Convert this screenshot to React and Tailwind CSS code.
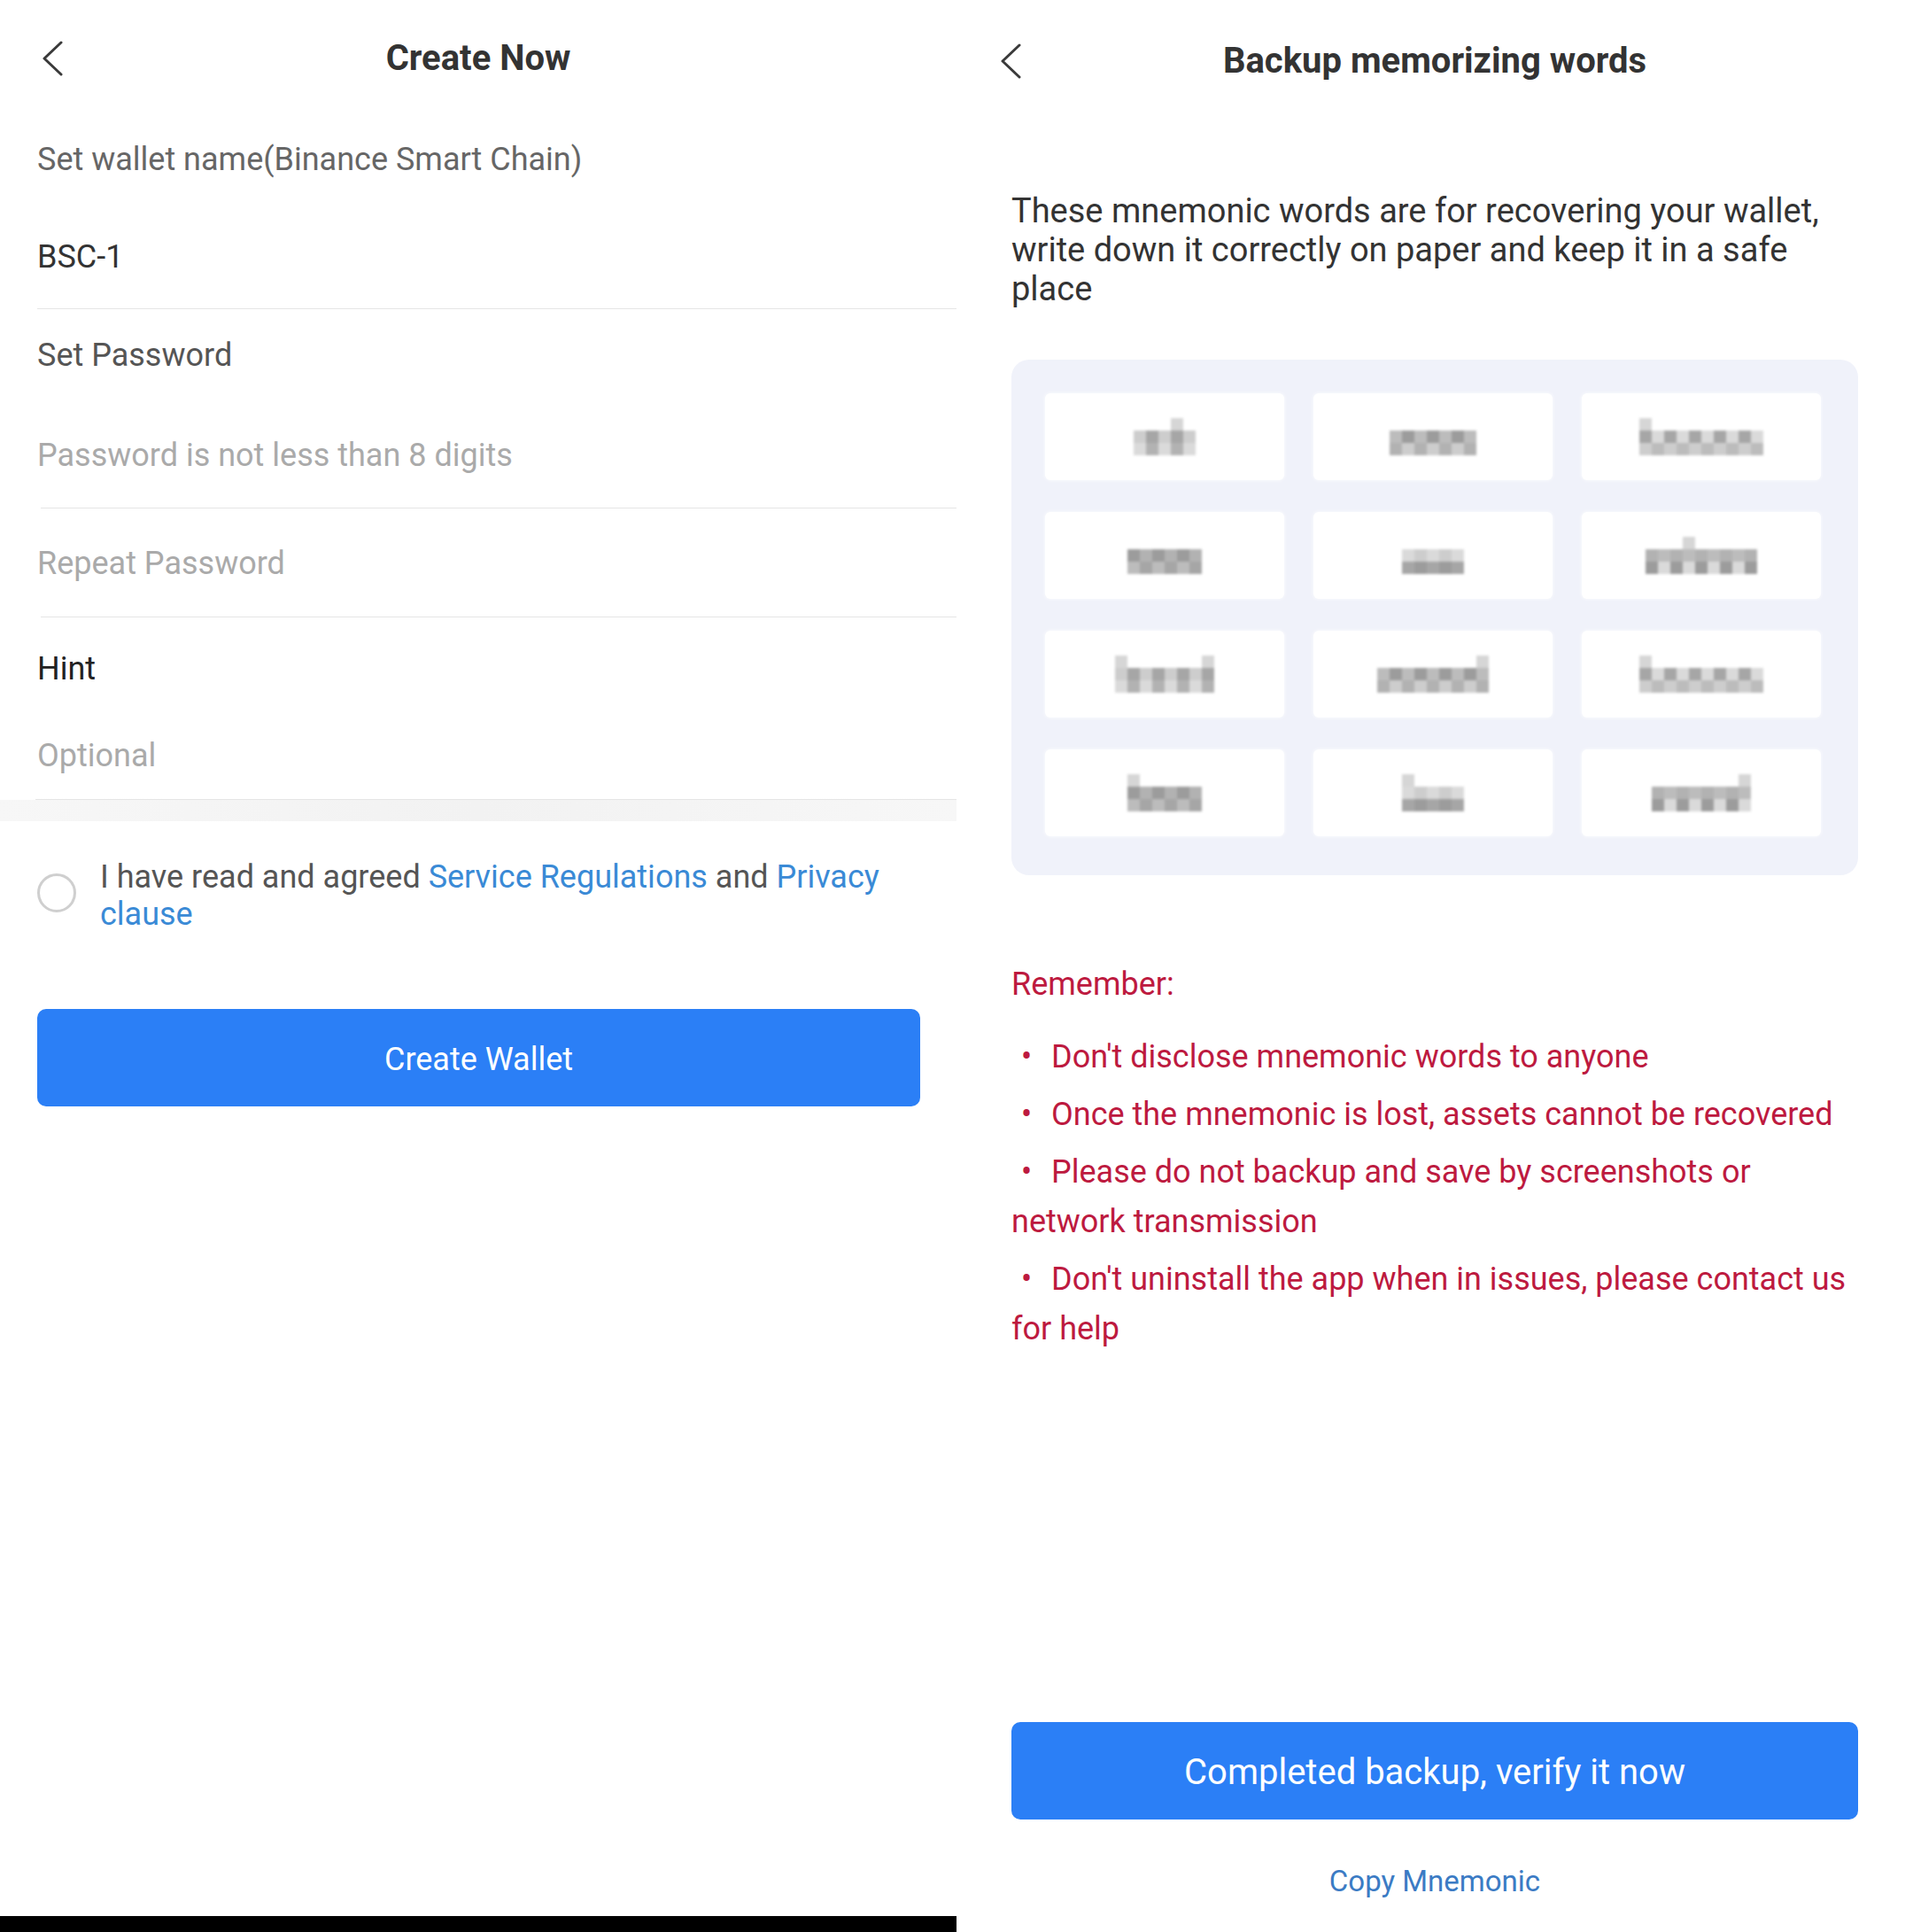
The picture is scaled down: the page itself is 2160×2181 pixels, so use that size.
import React from "react";

// shades used for the pixelated (hidden) mnemonic words
const shades = [
  "bg-[#a6a6a6]",
  "bg-[#bcbcbc]",
  "bg-[#cdcdcd]",
  "bg-[#b2b2b2]",
  "bg-[#dadada]",
  "bg-[#9c9c9c]",
];

const words = [
  { cols: 5, asc: [3] },
  { cols: 7, asc: [] },
  { cols: 10, asc: [0] },
  { cols: 6, asc: [] },
  { cols: 5, asc: [] },
  { cols: 9, asc: [3] },
  { cols: 8, asc: [0, 7] },
  { cols: 9, asc: [8] },
  { cols: 10, asc: [0] },
  { cols: 6, asc: [0] },
  { cols: 5, asc: [0] },
  { cols: 8, asc: [7] },
];

const warnings = [
  "Don't disclose mnemonic words to anyone",
  "Once the mnemonic is lost, assets cannot be recovered",
  "Please do not backup and save by screenshots or network transmission",
  "Don't uninstall the app when in issues, please contact us for help",
];

const Chevron = () => (
  <svg width="26" height="40" viewBox="0 0 26 40" fill="none">
    <path
      d="M23 2 L4 20 L23 38"
      stroke="#3a3a3a"
      strokeWidth="3"
      strokeLinecap="round"
      strokeLinejoin="round"
    />
  </svg>
);

function Mosaic({ word, index }) {
  const cells = [];
  for (let r = 0; r < 3; r++) {
    const row = [];
    for (let c = 0; c < word.cols; c++) {
      if (r === 0) {
        row.push(
          <div
            key={c}
            className={`w-[14px] h-[14px] ${word.asc.includes(c) ? "bg-[#d6d6d6]" : ""}`}
          />
        );
      } else {
        const shade = shades[(index * 5 + c * 3 + r * 2 + (c % 2) * r) % shades.length];
        row.push(<div key={c} className={`w-[14px] h-[14px] ${shade}`} />);
      }
    }
    cells.push(
      <div key={r} className="flex">
        {row}
      </div>
    );
  }
  return <div className="flex flex-col blur-[1.5px]">{cells}</div>;
}

function CreateNow() {
  return (
    <div className="flex flex-col w-[1080px] h-full">
      <header className="grid grid-cols-[1fr_auto_1fr] items-center mt-[42px] h-[48px]">
        <div className="flex pl-[46px]">
          <Chevron />
        </div>
        <h1 className="text-[40px] leading-[48px] font-bold text-[#333]">Create Now</h1>
        <div />
      </header>

      <div className="pl-[42px] text-[36px] leading-[44px]">
        <p className="mt-[68px] text-[#666]">Set wallet name(Binance Smart Chain)</p>
        <p className="mt-[66px] text-[#333]">BSC-1</p>
      </div>
      <div className="ml-[42px] mt-[36px] h-px bg-[#e5e5e5]" />

      <div className="pl-[42px] text-[36px] leading-[44px]">
        <p className="mt-[30px] text-[#555]">Set Password</p>
        <p className="mt-[69px] text-[#aaa]">Password is not less than 8 digits</p>
      </div>
      <div className="ml-[46px] mt-[37px] h-px bg-[#e5e5e5]" />

      <p className="pl-[42px] mt-[40px] text-[36px] leading-[44px] text-[#aaa]">Repeat Password</p>
      <div className="ml-[46px] mt-[38px] h-px bg-[#e5e5e5]" />

      <div className="pl-[42px] text-[36px] leading-[44px]">
        <p className="mt-[36px] text-[#222]">Hint</p>
        <p className="mt-[54px] text-[#aaa]">Optional</p>
      </div>
      <div className="ml-[40px] mt-[27px] h-px bg-[#e5e5e5]" />
      <div className="h-[24px] bg-gradient-to-r from-[#f7f7f7] via-[#f2f2f2] to-[#f7f7f7]" />

      <div className="flex mt-[42px] pl-[42px] pr-[41px]">
        <div className="mt-[17px] w-[44px] h-[44px] shrink-0 rounded-full border-[3px] border-[#cfcfcf]" />
        <p className="ml-[27px] text-[36px] leading-[42px] text-[#555]">
          I have read and agreed <span className="text-[#3a8ad6]">Service Regulations</span> and{" "}
          <span className="text-[#3a8ad6]">Privacy clause</span>
        </p>
      </div>

      <button className="mt-[86px] ml-[42px] mr-[41px] h-[110px] rounded-[10px] bg-[#2b7ff6] text-white text-[36px] leading-[40px] pt-[4px]">
        Create Wallet
      </button>

      <div className="flex-1" />
      <div className="h-[18px] bg-black" />
    </div>
  );
}

function BackupWords() {
  return (
    <div className="flex flex-col w-[1080px] h-full">
      <header className="grid grid-cols-[1fr_auto_1fr] items-center mt-[45px] h-[48px]">
        <div className="flex pl-[48px]">
          <Chevron />
        </div>
        <h1 className="text-[40px] leading-[48px] font-bold text-[#333]">Backup memorizing words</h1>
        <div />
      </header>

      <div className="px-[62px]">
        <p className="mt-[123px] text-[38px] leading-[44px] text-[#333]">
          These mnemonic words are for recovering your wallet, write down it correctly on paper and
          keep it in a safe place
        </p>

        <div className="mt-[58px] grid grid-cols-3 gap-x-[33px] gap-y-[36px] rounded-[20px] bg-[#f0f2fa] pt-[38px] pb-[44px] pl-[38px] pr-[42px]">
          {words.map((w, i) => (
            <div
              key={i}
              className="h-[98px] flex items-center justify-center rounded-[6px] bg-white shadow-[0_0_4px_rgba(255,255,255,0.9)]"
            >
              <Mosaic word={w} index={i} />
            </div>
          ))}
        </div>
      </div>

      <div className="pl-[62px] pr-[48px] text-[36px] text-[#bd1a3f]">
        <p className="mt-[101px] leading-[44px]">Remember:</p>
        <ul className="mt-[32px] flex flex-col gap-[9px] leading-[56px]">
          {warnings.map((t) => (
            <li key={t}>
              <span className="inline-block w-[45px] pl-[11px]">•</span>
              {t}
            </li>
          ))}
        </ul>
      </div>

      <div className="flex-1" />

      <button className="mx-[62px] h-[110px] rounded-[10px] bg-[#2b7ff6] text-white text-[40px] leading-[44px] pt-[4px]">
        Completed backup, verify it now
      </button>
      <p className="mt-[50px] mb-[37px] text-center text-[33px] leading-[40px] text-[#3b7bc4]">
        Copy Mnemonic
      </p>
    </div>
  );
}

export default function App() {
  return (
    <div className="flex w-[2160px] h-[2181px] bg-white font-['Roboto',sans-serif]">
      <CreateNow />
      <BackupWords />
    </div>
  );
}
